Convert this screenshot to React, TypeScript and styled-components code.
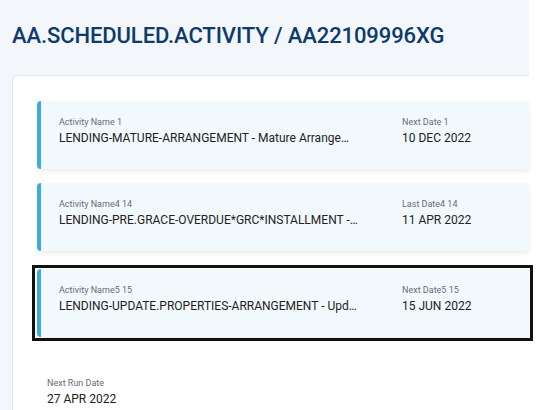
import styled, {createGlobalStyle} from 'styled-components';

const GlobalStyle = createGlobalStyle`
  html, body {
    margin: 0;
    padding: 0;
    background: #ffffff;
  }
  body {
    font-family: Roboto, "Liberation Sans", sans-serif;
  }
`;

const Page = styled.div`
  width: 529px;
  height: 410px;
  background: #f3f6fb;
  overflow: visible;
`;

const Title = styled.h1`
  margin: 0;
  padding: 23px 0 0 12px;
  height: 75px;
  box-sizing: border-box;
  font-size: 22px;
  font-weight: 500;
  color: #0d3b6c;
  letter-spacing: -0.1px;
`;

const Panel = styled.div`
  margin-left: 12px;
  background: #ffffff;
  border: 1px solid #dde9f5;
  border-right: none;
  border-bottom: none;
  border-radius: 6px 0 0 0;
  padding: 25px 0 0 24px;
  height: 335px;
  box-sizing: border-box;
`;

const List = styled.div`
  display: flex;
  flex-direction: column;
  gap: 14px;
`;

// focus frame drawn around the selected card
const SelectedFrame = styled.div`
  margin: 0 -4px -4px -5px;
  padding: 1px 1px 1px 2px;
  border: 3px solid #111;
`;

const Card = styled.div`
  display: grid;
  grid-template-columns: 300px 1fr;
  column-gap: 43px;
  height: 68px;
  box-sizing: border-box;
  padding: 16px 0 0 18px;
  background: #f2f9fd;
  border-left: 4px solid #3aabe1;
  border-radius: 4px 0 0 4px;
  box-shadow: 0 3px 5px rgba(0, 0, 0, 0.07);
`;

const Field = styled.div`
  min-width: 0;
  display: flex;
  flex-direction: column;
  gap: 3px;
`;

const Label = styled.div`
  font-size: 9px;
  color: #6a6a76;
  line-height: 11px;
`;

const Value = styled.div`
  font-size: 12px;
  color: #222;
  line-height: 14px;
  white-space: nowrap;
  overflow: hidden;
  text-overflow: ellipsis;
`;

const Summary = styled.div`
  margin-top: 41px;
  padding-left: 10px;
  display: flex;
  flex-direction: column;
  gap: 3px;
`;

const activities = [
  {
    nameLabel: 'Activity Name 1',
    name: 'LENDING-MATURE-ARRANGEMENT - Mature Arrangement',
    dateLabel: 'Next Date 1',
    date: '10 DEC 2022',
  },
  {
    nameLabel: 'Activity Name4 14',
    name: 'LENDING-PRE.GRACE-OVERDUE*GRC*INSTALLMENT - Pre Grace Overdue',
    dateLabel: 'Last Date4 14',
    date: '11 APR 2022',
  },
  {
    nameLabel: 'Activity Name5 15',
    name: 'LENDING-UPDATE.PROPERTIES-ARRANGEMENT - Update Properties',
    dateLabel: 'Next Date5 15',
    date: '15 JUN 2022',
    selected: true,
  },
];

type Activity = (typeof activities)[number];

const ActivityCard = ({a}: {a: Activity}) => (
  <Card>
    <Field>
      <Label>{a.nameLabel}</Label>
      <Value>{a.name}</Value>
    </Field>
    <Field>
      <Label>{a.dateLabel}</Label>
      <Value>{a.date}</Value>
    </Field>
  </Card>
);

const App = () => {
  return (
    <Page>
      <GlobalStyle />
      <Title>AA.SCHEDULED.ACTIVITY / AA22109996XG</Title>
      <Panel>
        <List>
          {activities.map(a =>
            a.selected ? (
              <SelectedFrame key={a.nameLabel}>
                <ActivityCard a={a} />
              </SelectedFrame>
            ) : (
              <ActivityCard key={a.nameLabel} a={a} />
            ),
          )}
        </List>
        <Summary>
          <Label>Next Run Date</Label>
          <Value>27 APR 2022</Value>
        </Summary>
      </Panel>
    </Page>
  );
};

export default App;
